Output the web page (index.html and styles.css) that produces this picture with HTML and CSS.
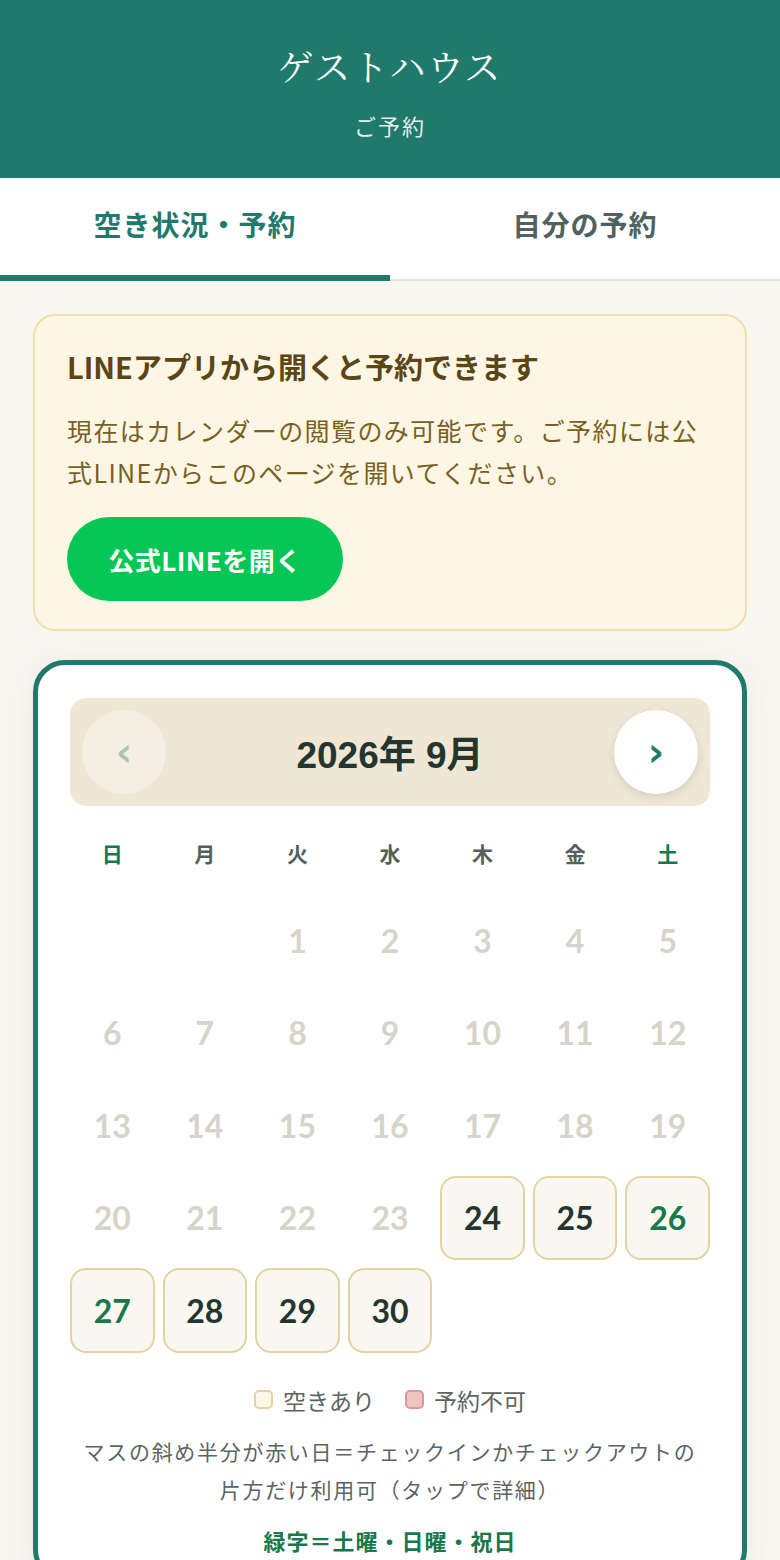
FILE: index.html
```html
<!DOCTYPE html>
<html lang="ja">
<head>
<meta charset="utf-8">
<title>ゲストハウス ご予約</title>
<link rel="stylesheet" href="styles.css">
</head>
<body>
<header class="hero">
  <h1 class="hero-title">ゲストハウス</h1>
  <p class="hero-sub">ご予約</p>
</header>
<nav class="tabs">
  <div class="tab active">空き状況・予約</div>
  <div class="tab">自分の予約</div>
</nav>
<main class="content">
  <section class="notice">
    <h2 class="notice-title">LINEアプリから開くと予約できます</h2>
    <p class="notice-text">現在はカレンダーの閲覧のみ可能です。ご予約には公式LINEからこのページを開いてください。</p>
    <a class="line-btn">公式LINEを開く</a>
  </section>
  <section class="calendar">
    <div class="month-nav">
      <button class="nav-btn prev">‹</button>
      <div class="month-label">2026年 9月</div>
      <button class="nav-btn next">›</button>
    </div>
    <div class="grid weekdays">
      <div class="wd weekend">日</div>
      <div class="wd">月</div>
      <div class="wd">火</div>
      <div class="wd">水</div>
      <div class="wd">木</div>
      <div class="wd">金</div>
      <div class="wd weekend">土</div>
    </div>
    <div class="grid days">
      <div class="day empty"></div>
      <div class="day empty"></div>
      <div class="day past">1</div>
      <div class="day past">2</div>
      <div class="day past">3</div>
      <div class="day past">4</div>
      <div class="day past">5</div>
      <div class="day past">6</div>
      <div class="day past">7</div>
      <div class="day past">8</div>
      <div class="day past">9</div>
      <div class="day past">10</div>
      <div class="day past">11</div>
      <div class="day past">12</div>
      <div class="day past">13</div>
      <div class="day past">14</div>
      <div class="day past">15</div>
      <div class="day past">16</div>
      <div class="day past">17</div>
      <div class="day past">18</div>
      <div class="day past">19</div>
      <div class="day past">20</div>
      <div class="day past">21</div>
      <div class="day past">22</div>
      <div class="day past">23</div>
      <div class="day open">24</div>
      <div class="day open">25</div>
      <div class="day open weekend">26</div>
      <div class="day open weekend">27</div>
      <div class="day open">28</div>
      <div class="day open">29</div>
      <div class="day open">30</div>
    </div>
    <div class="legend">
      <span class="legend-item"><span class="swatch ok"></span>空きあり</span>
      <span class="legend-item"><span class="swatch ng"></span>予約不可</span>
    </div>
    <p class="note">マスの斜め半分が赤い日＝チェックインかチェックアウトの片方だけ利用可（タップで詳細）</p>
    <p class="note-green">緑字＝土曜・日曜・祝日</p>
  </section>
</main>
</body>
</html>
```

FILE: styles.css
```css
* { box-sizing: border-box; }
html, body { margin: 0; padding: 0; }
body {
  background: #f8f6f0;
  font-family: "Noto Sans CJK JP", "Noto Sans", sans-serif;
  color: #2a3b37;
}
.hero {
  background: #207a6c;
  color: #fff;
  text-align: center;
  height: 178px;
  padding-top: 40px;
}
.hero-title {
  margin: 0;
  font-family: "Noto Serif CJK JP", "Liberation Serif", "Noto Sans CJK JP", serif;
  font-weight: 400;
  font-size: 36px;
  line-height: 52px;
  letter-spacing: 2px;
}
.hero-sub {
  margin: 18px 0 0;
  font-size: 22px;
  line-height: 30px;
  color: #e3efec;
  letter-spacing: 2px;
}
.tabs {
  display: flex;
  background: #fff;
  border-bottom: 2px solid #e7e3da;
  height: 103px;
}
.tab {
  flex: 1;
  display: flex;
  align-items: center;
  justify-content: center;
  font-size: 28px;
  font-weight: 700;
  color: #4f6260;
  padding-bottom: 6px;
  border-bottom: 6px solid transparent;
  margin-bottom: -2px;
  letter-spacing: 1px;
}
.tab.active {
  color: #207a6c;
  border-bottom-color: #207a6c;
}
.content {
  padding: 33px 33px 40px;
}
.notice {
  background: #fdf6e4;
  border: 2px solid #efdfa6;
  border-radius: 22px;
  padding: 30px 32px 28px;
}
.notice-title {
  margin: 0;
  font-size: 29px;
  line-height: 40px;
  font-weight: 700;
  color: #5a4514;
}
.notice-text {
  margin: 23px 0 24px;
  font-size: 25px;
  letter-spacing: 1.4px;
  line-height: 42px;
  color: #7a5f22;
}
.line-btn {
  display: inline-flex;
  align-items: center;
  justify-content: center;
  height: 84px;
  width: 276px;
  border-radius: 42px;
  background: #06c755;
  color: #fff;
  font-size: 26px;
  letter-spacing: 0.5px;
  font-weight: 700;
}
.calendar {
  margin-top: 29px;
  background: #fff;
  border: 5px solid #207a6c;
  border-radius: 32px;
  padding: 33px 32px 20px;
  box-shadow: 0 6px 24px rgba(60, 60, 40, 0.08);
}
.month-nav {
  display: flex;
  align-items: center;
  justify-content: space-between;
  background: #efe6d4;
  border-radius: 16px;
  height: 108px;
  padding: 0 12px;
}
.nav-btn {
  width: 84px;
  height: 84px;
  border-radius: 50%;
  border: none;
  background: #fff;
  color: #207a6c;
  font-size: 40px;
  font-weight: 700;
  font-family: "DejaVu Sans", sans-serif;
  line-height: 84px;
  padding: 0 0 6px;
  box-shadow: 0 3px 8px rgba(90, 80, 50, 0.15);
}
.nav-btn.prev {
  background: #f4efe3;
  color: #a9c6b6;
  box-shadow: none;
}
.month-label {
  font-family: "Liberation Sans", "Noto Sans CJK JP", sans-serif;
  font-size: 37px;
  font-weight: 700;
  color: #243530;
}
.grid {
  display: grid;
  grid-template-columns: repeat(7, 1fr);
  column-gap: 8px;
}
.weekdays {
  margin-top: 32px;
  height: 30px;
  margin-bottom: 30px;
}
.wd {
  text-align: center;
  font-size: 21px;
  font-weight: 700;
  line-height: 30px;
  color: #555f5c;
}
.wd.weekend { color: #17784a; }
.days {
  row-gap: 8px;
}
.day {
  height: 84.5px;
  display: flex;
  align-items: center;
  justify-content: center;
  font-family: "Lato", "Inter", sans-serif;
  font-size: 32px;
  font-weight: 700;
}
.day.past { color: #d8d3c9; }
.day.open {
  background: #faf7f0;
  border: 2px solid #e3d3a4;
  border-radius: 16px;
  color: #243530;
}
.day.open.weekend { color: #17784a; }
.legend {
  margin-top: 30px;
  display: flex;
  justify-content: center;
  gap: 30px;
  font-size: 23px;
  line-height: 34px;
  color: #5b6461;
}
.legend-item {
  display: inline-flex;
  align-items: center;
  gap: 10px;
}
.swatch {
  width: 19px;
  height: 19px;
  border-radius: 5px;
  display: inline-block;
}
.swatch.ok { background: #fbf7ea; border: 2px solid #e2d29f; }
.swatch.ng { background: #f0c4c0; border: 2px solid #d99a95; }
.note {
  margin: 15px 0 0;
  text-align: center;
  font-size: 21px;
  letter-spacing: 1.7px;
  line-height: 38px;
  color: #5b6461;
  padding: 0 8px;
}
.note-green {
  margin: 15px 0 0;
  text-align: center;
  font-size: 22px;
  letter-spacing: 1px;
  line-height: 34px;
  font-weight: 700;
  color: #17784a;
}
```
